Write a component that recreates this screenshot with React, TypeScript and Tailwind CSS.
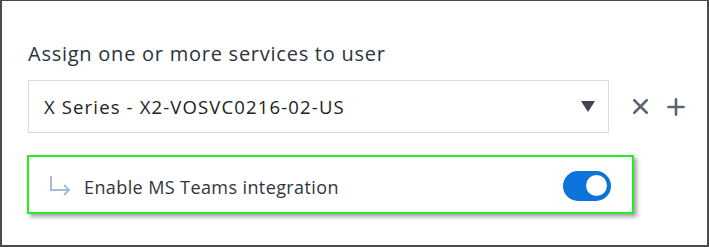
import { X, Plus } from 'lucide-react'

export default function App() {
  return (
    <div
      className="w-[709px] h-[247px] bg-white border-l-2 border-r-2 border-b-2 border-t border-[#4a4a4a] overflow-hidden"
      style={{ fontFamily: '"Open Sans", "Noto Sans", sans-serif' }}
    >
      <div className="pl-[26px] pt-[40px]">
        {/* Heading */}
        <div className="text-[20px] leading-[26px] tracking-[0.75px] text-[#2b3340]">Assign one or more services to user</div>

        {/* Service select row */}
        <div className="mt-[13px] flex items-center">
          <div className="w-[581px] h-[53px] border border-[#d3dce6] flex items-center pl-[15px] pr-[13px]">
            <span className="flex-1 pt-[1px] text-[18.5px] tracking-[1.15px] text-[#222]">X Series - X2-VOSVC0216-02-US</span>
            <svg width="14" height="11" viewBox="0 0 14 11">
              <polygon points="0,0 14,0 7,11" fill="#3f4650" />
            </svg>
          </div>
          <button className="ml-[19px] text-[#5b6570]">
            <X size={25} strokeWidth={2.4} />
          </button>
          <button className="ml-[10px] text-[#5b6570]">
            <Plus size={26} strokeWidth={2.4} />
          </button>
        </div>

        {/* MS Teams toggle */}
        <div className="mt-[22px] ml-[-1px] w-[607px] h-[59px] border-2 border-[#22ee22] shadow-[3px_3px_4px_rgba(0,0,0,0.35)] flex items-center pl-[19px] pr-[21px]">
          <svg width="24" height="22" viewBox="0 0 24 22" fill="none" stroke="#a8bbd4" strokeWidth="2" className="mt-[2px]">
            <path d="M3 1 V15 H21" />
            <path d="M16 10 L21 15 L16 20" />
          </svg>
          <span className="ml-[12px] flex-1 pt-[6px] text-[18px] tracking-[0.4px] text-[#2f3540]">Enable MS Teams integration</span>
          <div className="w-[48px] h-[30px] mt-[2px] rounded-full bg-[#0b73d9] flex items-center justify-end pr-[4px]">
            <div className="w-[21px] h-[21px] rounded-full bg-white" />
          </div>
        </div>
      </div>
    </div>
  )
}
